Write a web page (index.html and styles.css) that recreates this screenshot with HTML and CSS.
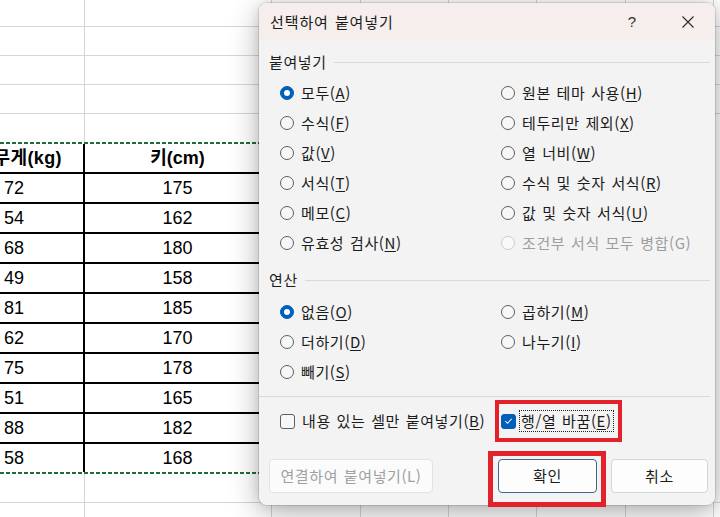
FILE: index.html
```html
<!DOCTYPE html>
<html lang="ko">
<head>
<meta charset="utf-8">
<title>선택하여 붙여넣기</title>
<link rel="stylesheet" href="styles.css">
</head>
<body>
<div class="screen">
  <div class="sheet">
    <div class="row first"><span class="c ca"></span><span class="c cb"></span><span class="c cc"></span><span class="c cd"></span><span class="c ce"></span><span class="c cf"></span><span class="c cg"></span><span class="c ch"></span></div>
    <div class="row"><span class="c ca"></span><span class="c cb"></span><span class="c cc"></span><span class="c cd"></span><span class="c ce"></span><span class="c cf"></span><span class="c cg"></span><span class="c ch"></span></div>
    <div class="row"><span class="c ca"></span><span class="c cb"></span><span class="c cc"></span><span class="c cd"></span><span class="c ce"></span><span class="c cf"></span><span class="c cg"></span><span class="c ch"></span></div>
    <div class="row"><span class="c ca"></span><span class="c cb"></span><span class="c cc"></span><span class="c cd"></span><span class="c ce"></span><span class="c cf"></span><span class="c cg"></span><span class="c ch"></span></div>
    <div class="row pre"><span class="c ca"></span><span class="c cb"></span><span class="c cc"></span><span class="c cd"></span><span class="c ce"></span><span class="c cf"></span><span class="c cg"></span><span class="c ch"></span></div>
    <div class="table">
      <div class="ants"></div>
      <div class="trow head"><span class="ta"><span class="hd">무게(kg)</span></span><span class="tb">키(cm)</span></div>
      <div class="trow"><span class="ta">72</span><span class="tb">175</span></div>
      <div class="trow"><span class="ta">54</span><span class="tb">162</span></div>
      <div class="trow"><span class="ta">68</span><span class="tb">180</span></div>
      <div class="trow"><span class="ta">49</span><span class="tb">158</span></div>
      <div class="trow"><span class="ta">81</span><span class="tb">185</span></div>
      <div class="trow"><span class="ta">62</span><span class="tb">170</span></div>
      <div class="trow"><span class="ta">75</span><span class="tb">178</span></div>
      <div class="trow"><span class="ta">51</span><span class="tb">165</span></div>
      <div class="trow"><span class="ta">88</span><span class="tb">182</span></div>
      <div class="trow last"><span class="ta">58</span><span class="tb">168</span></div>
      <div class="ants"></div>
    </div>
    <div class="row"><span class="c ca"></span><span class="c cb"></span><span class="c cc"></span><span class="c cd"></span><span class="c ce"></span><span class="c cf"></span><span class="c cg"></span><span class="c ch"></span></div>
    <div class="row"><span class="c ca"></span><span class="c cb"></span><span class="c cc"></span><span class="c cd"></span><span class="c ce"></span><span class="c cf"></span><span class="c cg"></span><span class="c ch"></span></div>
  </div>

  <div class="dialog">
    <div class="titlebar">
      <div class="title">선택하여 붙여넣기</div>
      <div class="tb-btn help">?</div>
      <div class="tb-btn close">
        <svg width="12" height="12" viewBox="0 0 12 12"><path d="M0.5 0.5 L11.5 11.5 M11.5 0.5 L0.5 11.5" stroke="#2b2b2b" stroke-width="1.1" fill="none"/></svg>
      </div>
    </div>
    <div class="body">
      <div class="group-label"><span>붙여넣기</span><i class="rule"></i></div>
      <div class="options">
        <div class="opt"><span class="radio on"></span><span>모두(<u>A</u>)</span></div>
        <div class="opt"><span class="radio"></span><span>원본 테마 사용(<u>H</u>)</span></div>
        <div class="opt"><span class="radio"></span><span>수식(<u>F</u>)</span></div>
        <div class="opt"><span class="radio"></span><span>테두리만 제외(<u>X</u>)</span></div>
        <div class="opt"><span class="radio"></span><span>값(<u>V</u>)</span></div>
        <div class="opt"><span class="radio"></span><span>열 너비(<u>W</u>)</span></div>
        <div class="opt"><span class="radio"></span><span>서식(<u>T</u>)</span></div>
        <div class="opt"><span class="radio"></span><span>수식 및 숫자 서식(<u>R</u>)</span></div>
        <div class="opt"><span class="radio"></span><span>메모(<u>C</u>)</span></div>
        <div class="opt"><span class="radio"></span><span>값 및 숫자 서식(<u>U</u>)</span></div>
        <div class="opt"><span class="radio"></span><span>유효성 검사(<u>N</u>)</span></div>
        <div class="opt disabled"><span class="radio"></span><span>조건부 서식 모두 병합(G)</span></div>
      </div>

      <div class="group-label second"><span>연산</span><i class="rule"></i></div>
      <div class="options ops">
        <div class="opt"><span class="radio on"></span><span>없음(<u>O</u>)</span></div>
        <div class="opt"><span class="radio"></span><span>곱하기(<u>M</u>)</span></div>
        <div class="opt"><span class="radio"></span><span>더하기(<u>D</u>)</span></div>
        <div class="opt"><span class="radio"></span><span>나누기(<u>I</u>)</span></div>
        <div class="opt"><span class="radio"></span><span>빼기(<u>S</u>)</span></div>
      </div>

      <div class="separator"></div>

      <div class="options checks">
        <div class="opt"><span class="check"></span><span>내용 있는 셀만 붙여넣기(<u>B</u>)</span></div>
        <div class="opt"><span class="check on"><svg width="14" height="14" viewBox="0 0 14 14"><path d="M3.6 7.2 L6 9.5 L10.6 4.6" stroke="#fff" stroke-width="1.1" fill="none"/></svg></span><span class="focus">행/열 바꿈(<u>E</u>)</span></div>
      </div>

      <div class="buttons">
        <div class="btn link">연결하여 붙여넣기(L)</div>
        <div class="btn ok">확인</div>
        <div class="btn cancel">취소</div>
      </div>
    </div>
  </div>

  <div class="mark mark-transpose"></div>
  <div class="mark mark-ok"></div>
</div>
</body>
</html>
```

FILE: styles.css
```css
html, body {
  margin: 0;
  padding: 0;
  background: #ffffff;
}

.screen {
  position: relative;
  width: 720px;
  height: 517px;
  overflow: hidden;
  font-family: "Noto Sans CJK KR", "Noto Sans", sans-serif;
}

/* ---------- spreadsheet ---------- */
.sheet {
  display: flex;
  flex-direction: column;
  font-family: "Liberation Sans", "Noto Sans CJK KR", sans-serif;
  font-size: 18px;
  color: #000;
}

.row {
  display: flex;
  flex: none;
  height: 29px;
  box-sizing: border-box;
  border-bottom: 1px solid #d6d6d6;
}

.row.first { height: 27px; }
.row.pre { height: 28px; border-bottom: none; }

.c {
  flex: none;
  box-sizing: border-box;
  border-right: 1px solid #d6d6d6;
}

.ca { width: 85px; }
.cb { width: 187px; }
.cc { width: 89px; }
.cd { width: 88px; }
.ce { width: 88px; }
.cf { width: 89px; }
.cg { width: 88px; }
.ch { flex: 1; border-right: none; }

.table {
  display: flex;
  flex-direction: column;
  flex: none;
}

.ants {
  height: 2px;
  width: 272px;
  background: repeating-linear-gradient(90deg, #1f6b3d 0 4px, rgba(255, 255, 255, 0) 4px 6px);
}

.trow {
  display: flex;
  height: 30px;
  line-height: 28px;
}

.trow.last { height: 28px; }

.ta, .tb {
  box-sizing: border-box;
  border-right: 2px solid #000;
  border-bottom: 2px solid #000;
  white-space: nowrap;
  flex: none;
}

.trow.last .ta, .trow.last .tb { border-bottom: none; }

.ta {
  width: 85px;
  padding-left: 4px;
}

.tb {
  width: 187px;
  text-align: center;
}

.trow.head { font-weight: bold; }

.trow.head .ta {
  display: flex;
  justify-content: flex-end;
  padding-left: 0;
  padding-right: 21px;
  overflow: hidden;
}

.hd {
  flex: none;
  letter-spacing: 0.4px;
}

/* ---------- dialog ---------- */
.dialog {
  position: absolute;
  left: 259px;
  top: 3px;
  width: 456px;
  height: 502px;
  background: #f3f3f3;
  border-radius: 8px;
  overflow: hidden;
  box-shadow: 0 0 0 1px rgba(0, 0, 0, 0.10), 0 8px 30px rgba(0, 0, 0, 0.30), 0 0 12px rgba(0, 0, 0, 0.10);
  color: #1b1b1b;
  font-size: 15px;
  letter-spacing: 0.6px;
  word-spacing: 1px;
}

.titlebar {
  display: flex;
  align-items: center;
  height: 37px;
  background: #f5eeec;
}

.title {
  flex: 1;
  padding-left: 11px;
  font-size: 15px;
  line-height: 20px;
  letter-spacing: 0.9px;
  color: #1b1b1b;
}

.tb-btn {
  display: flex;
  align-items: center;
  justify-content: center;
  height: 37px;
}

.help {
  width: 58px;
  font-size: 15px;
  color: #333;
  letter-spacing: 0;
  font-family: "Liberation Sans", sans-serif;
}

.close { width: 54px; }

.body {
  padding: 12px 5px 0 10px;
}

.group-label {
  display: flex;
  align-items: center;
  gap: 7px;
  height: 20px;
  line-height: 20px;
}

.group-label.second { margin-top: 12px; }

.rule {
  flex: 1;
  height: 1px;
  background: #d9d9d9;
}

.options {
  display: grid;
  grid-template-columns: 221px 1fr;
  grid-auto-rows: 30px;
  margin-left: 11px;
  margin-top: 6px;
}

.options.ops { margin-top: 7px; }

.opt {
  display: flex;
  align-items: center;
  line-height: 20px;
  white-space: nowrap;
}

.opt u {
  text-underline-offset: 2px;
  text-decoration-thickness: 1px;
}

.radio {
  position: relative;
  flex: none;
  width: 14px;
  height: 14px;
  box-sizing: border-box;
  border: 1px solid #5e5e5e;
  border-radius: 50%;
  background: #f7f7f7;
  margin-right: 7px;
}

.radio.on {
  background: #005fb8;
  border-color: #005fb8;
}

.radio.on::after {
  content: "";
  position: absolute;
  left: 3px;
  top: 3px;
  width: 6px;
  height: 6px;
  border-radius: 50%;
  background: #ffffff;
}

.opt.disabled { color: #9e9e9e; }

.opt.disabled .radio {
  border-color: #c9c9c9;
  background: #fafafa;
}

.separator {
  height: 1px;
  background: #d9d9d9;
  margin: 9px 0 0 -10px;
}

.options.checks {
  margin-top: 9px;
  margin-left: 11px;
}

.check {
  flex: none;
  width: 15px;
  height: 15px;
  box-sizing: border-box;
  border: 1px solid #5e5e5e;
  border-radius: 3px;
  background: #f7f7f7;
  margin-right: 7px;
  display: flex;
  align-items: center;
  justify-content: center;
}

.check.on {
  background: #005fb8;
  border-color: #005fb8;
  margin-right: 3px;
}

.focus {
  border: 1px dotted #222;
  padding: 0 1px;
  line-height: 20px;
}

.buttons {
  display: flex;
  align-items: center;
  margin-top: 23px;
  padding-right: 2px;
  gap: 14px;
}

.btn {
  height: 34px;
  box-sizing: border-box;
  display: flex;
  align-items: center;
  justify-content: center;
  border-radius: 4px;
  background: #fdfdfd;
  border: 1px solid #d6d6d6;
  font-size: 15px;
  line-height: 20px;
}

.btn.link {
  width: 164px;
  color: #a0a0a0;
  background: #fbfbfb;
  border-color: #e3e3e3;
  margin-right: auto;
}

.btn.ok {
  width: 99px;
  border-color: #3a6891;
}

.btn.cancel { width: 97px; }

/* ---------- red annotation boxes ---------- */
.mark {
  position: absolute;
  box-sizing: border-box;
  border-style: solid;
  border-color: #e3212b;
}

.mark-transpose {
  left: 495px;
  top: 400px;
  width: 127px;
  height: 42px;
  border-width: 4px;
}

.mark-ok {
  left: 488px;
  top: 451px;
  width: 118px;
  height: 56px;
  border-width: 5px;
}
```
